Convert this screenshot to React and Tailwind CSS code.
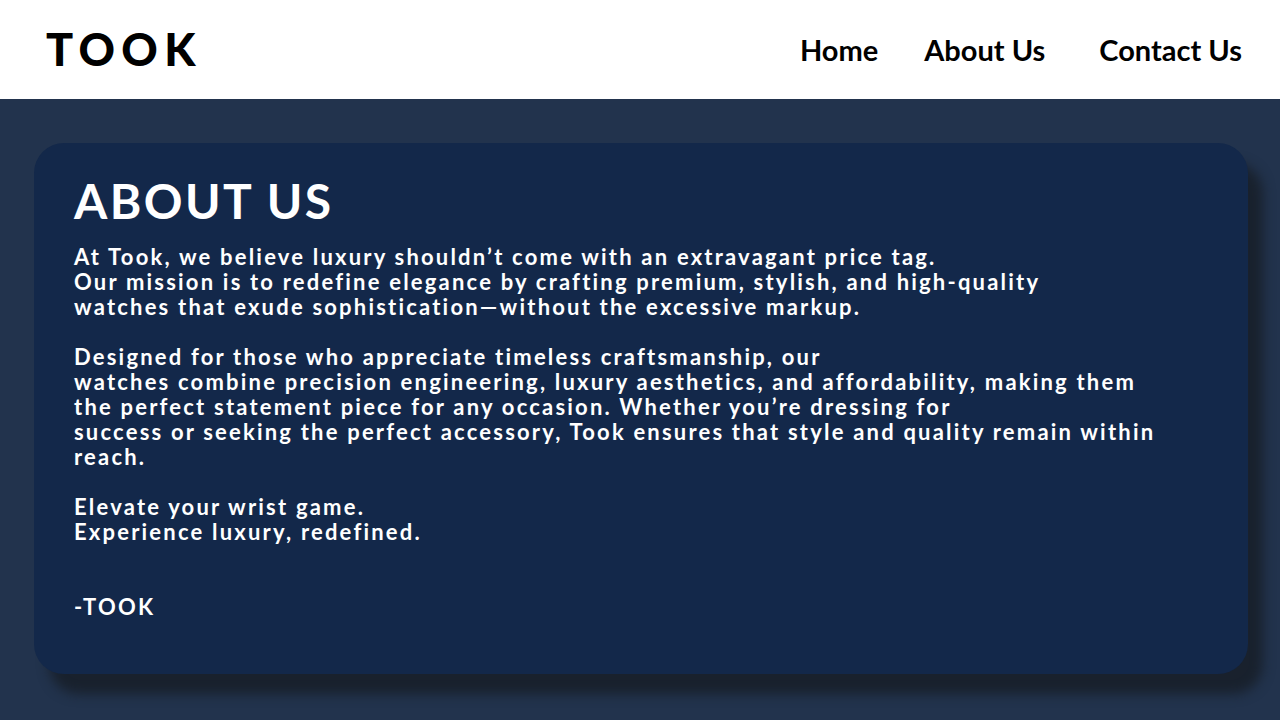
import React from 'react';

const paragraphs = [
  [
    'At Took, we believe luxury shouldn’t come with an extravagant price tag.',
    'Our mission is to redefine elegance by crafting premium, stylish, and high-quality',
    'watches that exude sophistication—without the excessive markup.',
  ],
  [
    'Designed for those who appreciate timeless craftsmanship, our',
    'watches combine precision engineering, luxury aesthetics, and affordability, making them',
    'the perfect statement piece for any occasion. Whether you’re dressing for',
    'success or seeking the perfect accessory, Took ensures that style and quality remain within',
    'reach.',
  ],
  ['Elevate your wrist game.', 'Experience luxury, redefined.'],
];

const App = () => {
  return (
    <div className="min-h-screen bg-[#22334d] font-['Lato','Noto_Sans',sans-serif]">
      {/* Header */}
      <header className="h-[99px] bg-white flex items-center justify-between pl-[46px] pr-[38px]">
        <div className="text-[45px] font-black tracking-[0.14em] text-black leading-none">TOOK</div>
        <nav className="flex items-center text-[29px] font-bold text-black leading-none">
          <a className="mr-[46px]">Home</a>
          <a className="mr-[54px]">About Us</a>
          <a>Contact Us</a>
        </nav>
      </header>

      {/* About card */}
      <main className="pt-[44px] pl-[34px] pr-[32px] pb-[40px]">
        <section className="bg-[#13284a] rounded-[30px] shadow-[15px_20px_12px_rgba(24,30,40,0.85)] px-[40px] pt-[30px] pb-[55px] text-white">
          <h1 className="text-[48px] font-bold tracking-[0.05em] leading-[56px] mb-[15px]">ABOUT US</h1>
          <div className="text-[22px] font-bold leading-[25px] tracking-[0.1em]">
            {paragraphs.map((lines, i) => (
              <div key={i} className="mb-[25px]">
                {lines.map((l) => (
                  <div key={l} className="whitespace-nowrap">{l}</div>
                ))}
              </div>
            ))}
            <div className="pt-[25px]">-TOOK</div>
          </div>
        </section>
      </main>
    </div>
  );
};

export default App;
